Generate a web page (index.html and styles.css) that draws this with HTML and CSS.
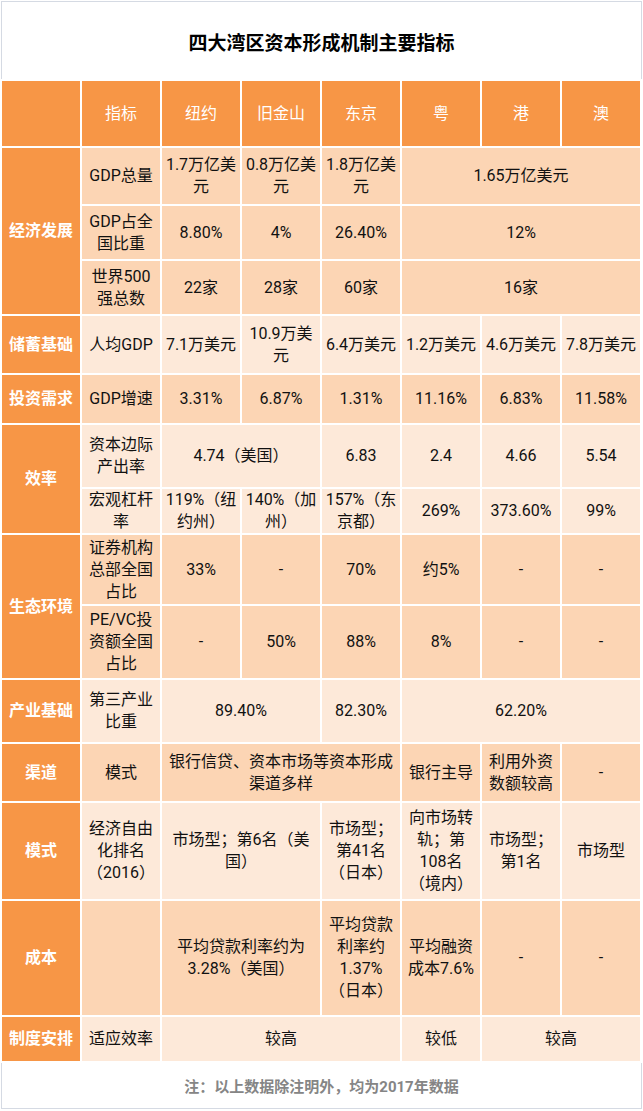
FILE: index.html
```html
<!DOCTYPE html>
<html lang="zh-CN">
<head>
<meta charset="utf-8">
<title>四大湾区资本形成机制主要指标</title>
<link rel="stylesheet" href="styles.css">
</head>
<body>
<div class="sheet">
  <div class="title">四大湾区资本形成机制主要指标</div>
  <table class="grid">
    <tr class="head">
      <th></th><th>指标</th><th>纽约</th><th>旧金山</th><th>东京</th><th>粤</th><th>港</th><th>澳</th>
    </tr>
    <tr class="dark r-total">
      <th class="label" rowspan="3">经济发展</th>
      <td>GDP总量</td><td>1.7万亿美元</td><td>0.8万亿美元</td><td>1.8万亿美元</td><td colspan="3">1.65万亿美元</td>
    </tr>
    <tr class="dark r-share">
      <td>GDP占全国比重</td><td>8.80%</td><td>4%</td><td>26.40%</td><td colspan="3">12%</td>
    </tr>
    <tr class="dark r-share">
      <td>世界500强总数</td><td>22家</td><td>28家</td><td>60家</td><td colspan="3">16家</td>
    </tr>
    <tr class="light r-save">
      <th class="label">储蓄基础</th>
      <td>人均GDP</td><td>7.1万美元</td><td>10.9万美元</td><td>6.4万美元</td><td>1.2万美元</td><td>4.6万美元</td><td>7.8万美元</td>
    </tr>
    <tr class="dark r-invest">
      <th class="label">投资需求</th>
      <td>GDP增速</td><td>3.31%</td><td>6.87%</td><td>1.31%</td><td>11.16%</td><td>6.83%</td><td>11.58%</td>
    </tr>
    <tr class="light r-margin">
      <th class="label" rowspan="2">效率</th>
      <td>资本边际产出率</td><td colspan="2">4.74（美国）</td><td>6.83</td><td>2.4</td><td>4.66</td><td>5.54</td>
    </tr>
    <tr class="light r-lever">
      <td>宏观杠杆率</td><td>119%（纽约州）</td><td>140%（加州）</td><td>157%（东京都）</td><td>269%</td><td>373.60%</td><td>99%</td>
    </tr>
    <tr class="dark r-broker">
      <th class="label" rowspan="2">生态环境</th>
      <td>证券机构总部全国占比</td><td>33%</td><td>-</td><td>70%</td><td>约5%</td><td>-</td><td>-</td>
    </tr>
    <tr class="dark r-pevc">
      <td>PE/VC投资额全国占比</td><td>-</td><td>50%</td><td>88%</td><td>8%</td><td>-</td><td>-</td>
    </tr>
    <tr class="light r-industry">
      <th class="label">产业基础</th>
      <td>第三产业比重</td><td colspan="2">89.40%</td><td>82.30%</td><td colspan="3">62.20%</td>
    </tr>
    <tr class="dark r-channel">
      <th class="label">渠道</th>
      <td>模式</td><td colspan="3">银行信贷、资本市场等资本形成渠道多样</td><td>银行主导</td><td>利用外资数额较高</td><td>-</td>
    </tr>
    <tr class="light r-mode">
      <th class="label">模式</th>
      <td>经济自由化排名（2016）</td><td colspan="2">市场型；第6名（美国）</td><td>市场型；第41名（日本）</td><td>向市场转轨；第108名（境内）</td><td>市场型；第1名</td><td>市场型</td>
    </tr>
    <tr class="dark r-cost">
      <th class="label">成本</th>
      <td></td><td colspan="2">平均贷款利率约为3.28%（美国）</td><td>平均贷款利率约1.37%（日本）</td><td>平均融资成本7.6%</td><td>-</td><td>-</td>
    </tr>
    <tr class="light r-system">
      <th class="label">制度安排</th>
      <td>适应效率</td><td colspan="3">较高</td><td>较低</td><td colspan="2">较高</td>
    </tr>
  </table>
  <div class="note">注：以上数据除注明外，均为2017年数据</div>
</div>
</body>
</html>
```

FILE: styles.css
```css
html, body {
  margin: 0;
  padding: 0;
  background: #ffffff;
}

.sheet {
  width: 643px;
  font-family: "Roboto", "Noto Sans CJK SC", sans-serif;
  color: #111111;
}

.title {
  box-sizing: border-box;
  margin: 1px 1px 0 1px;
  height: 78px;
  padding-top: 2px;
  border: 1px solid #d5dae3;
  border-bottom: none;
  display: flex;
  align-items: center;
  justify-content: center;
  font-family: "Noto Sans CJK SC", sans-serif;
  font-size: 19px;
  font-weight: 700;
  color: #000000;
}

.grid {
  width: 642px;
  table-layout: fixed;
  border-collapse: separate;
  border-spacing: 2px;
  font-size: 16px;
  line-height: 22px;
}

.grid th,
.grid td {
  padding: 0 3px;
  text-align: center;
  vertical-align: middle;
  font-weight: 400;
}

.head th {
  background: #f79646;
  color: #ffffff;
  height: 65px;
}

.grid .label {
  background: #f79646;
  color: #ffffff;
  font-weight: 700;
}

.dark td { background: #fcd5b4; }
.light td { background: #fde9d9; }

.r-total { height: 56px; }
.r-share { height: 53px; }
.r-save { height: 57px; }
.r-invest { height: 48px; }
.r-margin { height: 62px; }
.r-lever { height: 44px; }
.r-broker { height: 69px; }
.r-pevc { height: 72px; }
.r-industry { height: 62px; }
.r-channel { height: 57px; }
.r-mode { height: 96px; }
.r-cost { height: 114px; }
.r-system { height: 44px; }

.note {
  box-sizing: border-box;
  margin: 0 1px;
  height: 46px;
  border: 1px solid #d5dae3;
  border-top: none;
  display: flex;
  align-items: center;
  justify-content: center;
  font-family: "Roboto", "Noto Sans CJK SC", sans-serif;
  font-size: 15px;
  font-weight: 700;
  color: #858585;
}
```
